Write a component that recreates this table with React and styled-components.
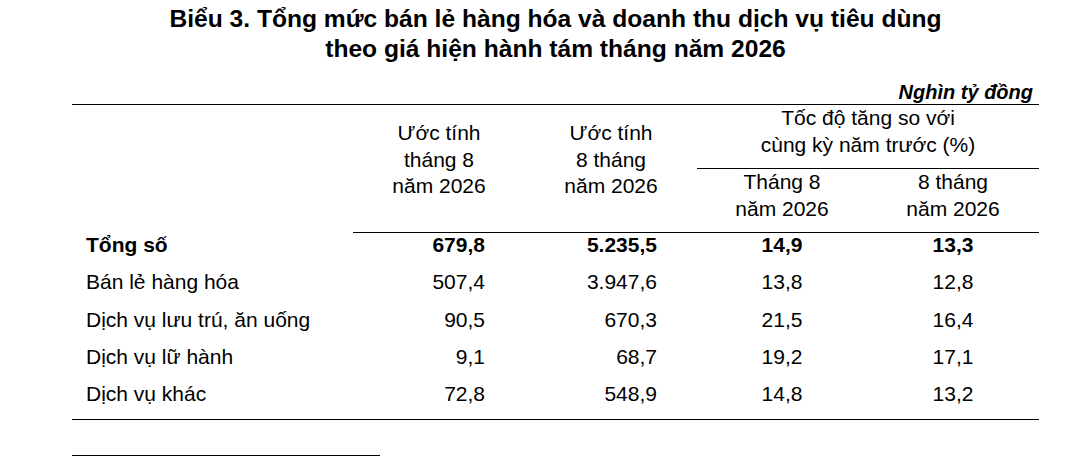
import React from 'react'
import styled, { createGlobalStyle } from 'styled-components'

const GlobalStyle = createGlobalStyle`
  body {
    margin: 0;
    background: #fff;
    color: #000;
    font-family: 'Liberation Sans', Arial, sans-serif;
  }
`

const Page = styled.div`
  width: 967px;
  padding: 4px 0 0 72px;
`

const Title = styled.h1`
  margin: 0;
  font-size: 24.6px;
  line-height: 30px;
  font-weight: 700;
  text-align: center;
`

const Unit = styled.div`
  margin-top: 16px;
  padding-right: 6px;
  font-size: 20px;
  line-height: 24px;
  font-weight: 700;
  font-style: italic;
  text-align: right;
`

const Table = styled.table`
  width: 967px;
  border-collapse: collapse;
  table-layout: fixed;
  font-size: 21px;
  border-top: 1px solid #000;
  border-bottom: 1px solid #000;
`

const HeadCell = styled.th`
  font-weight: 400;
  text-align: center;
  vertical-align: top;
  line-height: 26.5px;
  padding: ${props => (props.$tall ? '15px 0 0' : '0')};
  height: ${props => (props.$tall ? 'auto' : '63px')};
  border-bottom: ${props => (props.$ruled ? '1px solid #000' : 'none')};
`

const Cell = styled.td`
  height: 37.3px;
  padding: 0 ${props => (props.$align === 'right' ? '40px' : '0')} 0
    ${props => (props.$label ? '14px' : '0')};
  vertical-align: top;
  line-height: 24px;
  font-weight: ${props => (props.$bold ? 700 : 400)};
  text-align: ${props => props.$align || 'left'};
  white-space: nowrap;
`

const Footnote = styled.div`
  width: 308px;
  margin-top: 35px;
  border-top: 1px solid #000;
`

const rows = [
  ['Tổng số', '679,8', '5.235,5', '14,9', '13,3', true],
  ['Bán lẻ hàng hóa', '507,4', '3.947,6', '13,8', '12,8'],
  ['Dịch vụ lưu trú, ăn uống', '90,5', '670,3', '21,5', '16,4'],
  ['Dịch vụ lữ hành', '9,1', '68,7', '19,2', '17,1'],
  ['Dịch vụ khác', '72,8', '548,9', '14,8', '13,2']
]

const App = () => {
  return (
    <Page>
      <GlobalStyle />
      <Title>
        Biểu 3. Tổng mức bán lẻ hàng hóa và doanh thu dịch vụ tiêu dùng
        <br />
        theo giá hiện hành tám tháng năm 2026
      </Title>
      <Unit>Nghìn tỷ đồng</Unit>
      <Table>
        <colgroup>
          <col style={{ width: 281 }} />
          <col style={{ width: 172 }} />
          <col style={{ width: 172 }} />
          <col style={{ width: 170 }} />
          <col style={{ width: 172 }} />
        </colgroup>
        <thead>
          <tr>
            <HeadCell rowSpan={2} />
            <HeadCell rowSpan={2} $tall $ruled>
              Ước tính
              <br />
              tháng 8
              <br />
              năm 2026
            </HeadCell>
            <HeadCell rowSpan={2} $tall $ruled>
              Ước tính
              <br />8 tháng
              <br />
              năm 2026
            </HeadCell>
            <HeadCell colSpan={2} $ruled>
              Tốc độ tăng so với
              <br />
              cùng kỳ năm trước (%)
            </HeadCell>
          </tr>
          <tr>
            <HeadCell $ruled>
              Tháng 8
              <br />
              năm 2026
            </HeadCell>
            <HeadCell $ruled>
              8 tháng
              <br />
              năm 2026
            </HeadCell>
          </tr>
        </thead>
        <tbody>
          {rows.map(([label, a, b, c, d, bold]) => (
            <tr key={label}>
              <Cell $label $bold={bold}>{label}</Cell>
              <Cell $align="right" $bold={bold}>{a}</Cell>
              <Cell $align="right" $bold={bold}>{b}</Cell>
              <Cell $align="center" $bold={bold}>{c}</Cell>
              <Cell $align="center" $bold={bold}>{d}</Cell>
            </tr>
          ))}
        </tbody>
      </Table>
      <Footnote />
    </Page>
  )
}

export default App
